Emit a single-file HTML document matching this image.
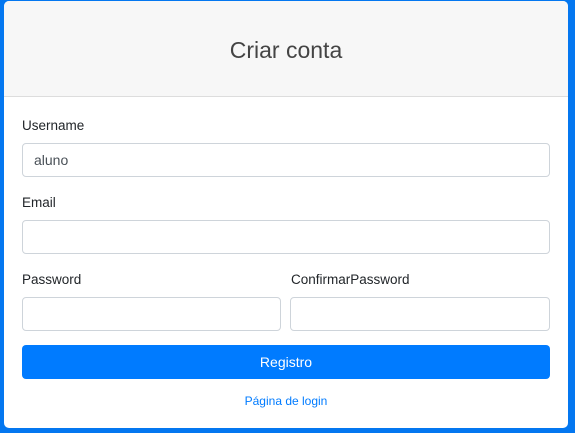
<!DOCTYPE html>
<html><head><style>
body{margin:0;width:575px;height:433px;background:#0477f0;font-family:"Liberation Sans",sans-serif;overflow:hidden;position:relative}
.card{position:absolute;left:4px;top:1px;width:564px;height:427px;background:#fff;border-radius:5px;overflow:hidden}
.hd{height:95px;background:#f7f7f7;border-bottom:1px solid #ddd;text-align:center;line-height:98px;font-size:23px;color:#444;font-weight:300}
label{position:absolute;font-size:13.5px;color:#212529}
.in{position:absolute;height:34px;border:1px solid #ced4da;border-radius:4px;box-sizing:border-box;font-size:14px;color:#495057;padding-left:11px;line-height:32px}
.btn{position:absolute;left:18px;top:344px;width:528px;height:34px;background:#007bff;border-radius:4px;color:#fff;text-align:center;line-height:34px;font-size:14px}
.lk{position:absolute;left:0;width:564px;top:393px;text-align:center;font-size:12px;color:#007bff}
</style></head><body>
<div class="card">
<div class="hd">Criar conta</div>
<label style="left:18px;top:117px">Username</label>
<div class="in" style="left:18px;top:142px;width:528px">aluno</div>
<label style="left:18px;top:194px">Email</label>
<div class="in" style="left:18px;top:219px;width:528px"></div>
<label style="left:18px;top:271px">Password</label>
<div class="in" style="left:18px;top:296px;width:259px"></div>
<label style="left:287px;top:271px">ConfirmarPassword</label>
<div class="in" style="left:286px;top:296px;width:260px"></div>
<div class="btn">Registro</div>
<div class="lk">Página de login</div>
</div>
</body></html>
